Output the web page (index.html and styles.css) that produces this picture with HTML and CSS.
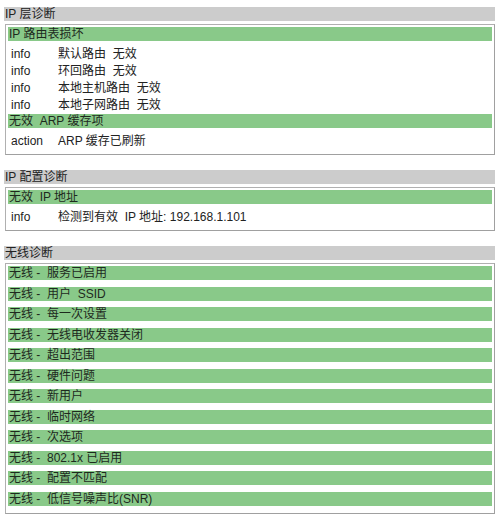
FILE: index.html
```html
<!DOCTYPE html>
<html lang="zh-CN">
<head>
<meta charset="utf-8">
<title>诊断</title>
<link rel="stylesheet" href="styles.css">
</head>
<body>
<div class="page">
  <section class="section">
    <div class="sec-title">IP 层诊断</div>
    <div class="box">
      <div class="group-title">IP 路由表损坏</div>
      <ul class="entries">
        <li class="entry"><span class="kind">info</span><span class="msg">默认路由  无效</span></li>
        <li class="entry"><span class="kind">info</span><span class="msg">环回路由  无效</span></li>
        <li class="entry"><span class="kind">info</span><span class="msg">本地主机路由  无效</span></li>
        <li class="entry"><span class="kind">info</span><span class="msg">本地子网路由  无效</span></li>
      </ul>
      <div class="group-title">无效  ARP 缓存项</div>
      <ul class="entries">
        <li class="entry"><span class="kind">action</span><span class="msg">ARP 缓存已刷新</span></li>
      </ul>
    </div>
  </section>

  <section class="section">
    <div class="sec-title">IP 配置诊断</div>
    <div class="box">
      <div class="group-title">无效  IP 地址</div>
      <ul class="entries">
        <li class="entry"><span class="kind">info</span><span class="msg">检测到有效  IP 地址: 192.168.1.101</span></li>
      </ul>
    </div>
  </section>

  <section class="section">
    <div class="sec-title">无线诊断</div>
    <div class="box box-list">
      <div class="group-title">无线 -  服务已启用</div>
      <div class="group-title">无线 -  用户  SSID</div>
      <div class="group-title">无线 -  每一次设置</div>
      <div class="group-title">无线 -  无线电收发器关闭</div>
      <div class="group-title">无线 -  超出范围</div>
      <div class="group-title">无线 -  硬件问题</div>
      <div class="group-title">无线 -  新用户</div>
      <div class="group-title">无线 -  临时网络</div>
      <div class="group-title">无线 -  次选项</div>
      <div class="group-title">无线 -  802.1x 已启用</div>
      <div class="group-title">无线 -  配置不匹配</div>
      <div class="group-title">无线 -  低信号噪声比(SNR)</div>
    </div>
  </section>
</div>
</body>
</html>
```

FILE: styles.css
```css
html, body {
  margin: 0;
  padding: 0;
  background: #ffffff;
}

body {
  font-family: "Liberation Sans", Arial, "Noto Sans CJK SC", sans-serif;
  font-size: 12px;
  color: #222222;
}

.page {
  width: 491px;
  margin-left: 4px;
  padding-top: 7px;
  display: flex;
  flex-direction: column;
  gap: 15px;
}

.section {
  display: flex;
  flex-direction: column;
  gap: 3px;
}

.sec-title {
  background: #cccccc;
  height: 14px;
  line-height: 14px;
  padding-left: 1px;
  white-space: pre;
  color: #222222;
}

.box {
  margin-left: 1px;
  border: 1px solid #b0b0b0;
  border-right-color: #a0a0a0;
  border-bottom-color: #a0a0a0;
  padding: 2px 2px 4px 2px;
}

.group-title {
  background: #89c989;
  height: 14px;
  line-height: 14px;
  padding-left: 1px;
  white-space: pre;
  color: #1e2a1e;
}

.entries {
  list-style: none;
  margin: 0;
  padding: 5px 0 0 3px;
}

.entry {
  display: flex;
  height: 17px;
  line-height: 17px;
}

.kind {
  width: 47px;
  flex: none;
}

.msg {
  white-space: pre;
}

.box-list {
  display: flex;
  flex-direction: column;
  gap: 6.5px;
  padding-bottom: 7px;
}
```
